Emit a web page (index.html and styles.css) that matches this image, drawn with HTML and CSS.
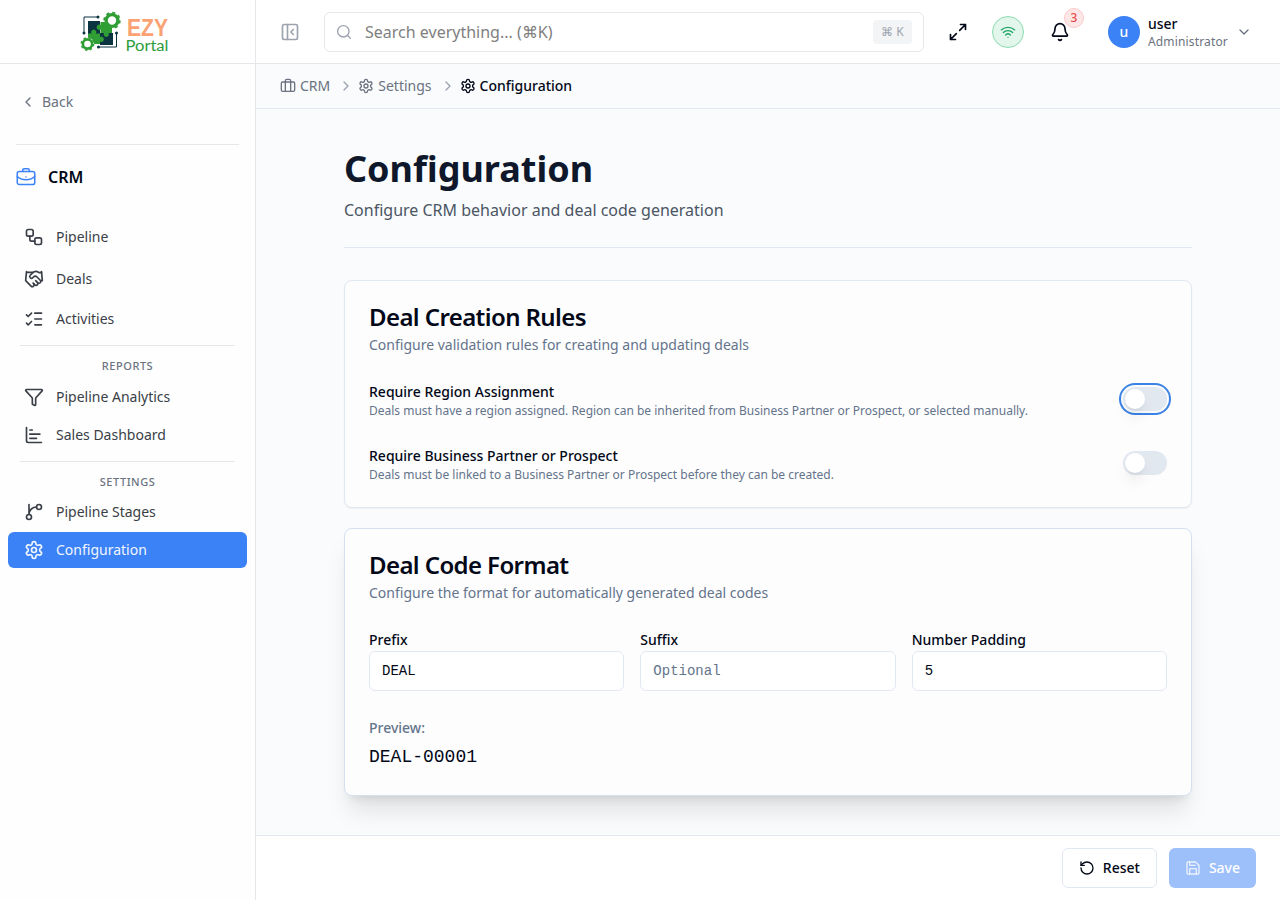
FILE: index.html
```html
<!DOCTYPE html>
<html lang="en">
<head>
<meta charset="utf-8">
<title>Configuration - EZY Portal</title>
<link rel="stylesheet" href="styles.css">
</head>
<body>
<svg class="defs" aria-hidden="true">
  <symbol id="gear" viewBox="0 0 24 24"><path d="M12.22 2h-.44a2 2 0 0 0-2 2v.18a2 2 0 0 1-1 1.73l-.43.25a2 2 0 0 1-2 0l-.15-.08a2 2 0 0 0-2.73.73l-.22.38a2 2 0 0 0 .73 2.73l.15.1a2 2 0 0 1 1 1.72v.51a2 2 0 0 1-1 1.74l-.15.09a2 2 0 0 0-.73 2.73l.22.38a2 2 0 0 0 2.73.73l.15-.08a2 2 0 0 1 2 0l.43.25a2 2 0 0 1 1 1.73V20a2 2 0 0 0 2 2h.44a2 2 0 0 0 2-2v-.18a2 2 0 0 1 1-1.73l.43-.25a2 2 0 0 1 2 0l.15.08a2 2 0 0 0 2.73-.73l.22-.39a2 2 0 0 0-.73-2.73l-.15-.08a2 2 0 0 1-1-1.74v-.5a2 2 0 0 1 1-1.74l.15-.09a2 2 0 0 0 .73-2.73l-.22-.38a2 2 0 0 0-2.73-.73l-.15.08a2 2 0 0 1-2 0l-.43-.25a2 2 0 0 1-1-1.73V4a2 2 0 0 0-2-2z"/><circle cx="12" cy="12" r="3"/></symbol>
  <symbol id="chev" viewBox="0 0 24 24"><path d="m9 18 6-6-6-6"/></symbol>
</svg>
<div class="app">
  <aside class="sidebar">
    <div class="brand">
      <svg class="logo" width="92" height="48" viewBox="80 10 92 48">
        <path d="M88 21h12v23H88zM100 33h13v12h-13z" fill="#0c3340"/>
        <path d="M84 33V17h13M116.500 33v14H99" fill="none" stroke="#0c3340" stroke-width="1"/>
        <g fill="#0c3340">
          <circle cx="84" cy="33" r="1.500"/><circle cx="116.500" cy="33" r="1.500"/>
          <circle cx="98" cy="17" r="1.500"/><circle cx="98.500" cy="47" r="1.500"/>
        </g>
        <g fill="#2f9e35">
          <path d="M100.500 22H112v11h-3.500a2.600 2.600 0 1 1-4.500 0h-3.500v-3.500a2.600 2.600 0 1 1 0-4.500z"/>
          <path d="M88 33.500h3.500a2.600 2.600 0 1 1 4.500 0h4v3.500a2.600 2.600 0 1 1 0 4.500V44H88z"/>
        </g>
        <g fill="#fff"><circle cx="112" cy="20.500" r="7.500"/><circle cx="87.500" cy="44" r="6.500"/></g>
        <g fill="none" stroke="#2f9e35">
          <circle cx="112" cy="20.500" r="5.900" stroke-width="3.400"/>
          <circle cx="112" cy="20.500" r="7.900" stroke-width="1.700" stroke-dasharray="3.100 3.100"/>
          <circle cx="87.500" cy="44" r="4.600" stroke-width="2.600"/>
          <circle cx="87.500" cy="44" r="6.200" stroke-width="1.400" stroke-dasharray="2.435 2.435"/>
        </g>
        <path d="M102 23.500h7l3 3.500V32h-9z" fill="#2f9e35"/>
        <text class="logo-top" x="127" y="36" textLength="41" lengthAdjust="spacingAndGlyphs">EZY</text>
        <text class="logo-bottom" x="125.500" y="51" textLength="43" lengthAdjust="spacingAndGlyphs">Portal</text>
      </svg>
    </div>
    <a class="back"><svg class="i16" viewBox="0 0 24 24"><path d="m15 18-6-6 6-6"/></svg>Back</a>
    <div class="module">
      <svg class="i20 module-icon" viewBox="0 0 24 24"><rect x="1.500" y="5.500" width="21" height="15.500" rx="2.500"/><path d="M8 5.500V4a2 2 0 0 1 2-2h4a2 2 0 0 1 2 2v1.500M1.500 11.500c5 5 16 5 21 0M12 12v.01"/></svg>
      <span>CRM</span>
    </div>
    <nav class="nav">
      <a class="item tall"><svg class="i20" viewBox="0 0 24 24"><rect x="3" y="3" width="8" height="8" rx="2"/><path d="M7 11v4a2 2 0 0 0 2 2h4"/><rect x="13" y="13" width="8" height="8" rx="2"/></svg>Pipeline</a>
      <a class="item deals"><svg class="i20" viewBox="0 0 24 24"><path d="m11 17 2 2a1 1 0 1 0 3-3"/><path d="m14 14 2.500 2.500a1 1 0 1 0 3-3l-3.880-3.880a3 3 0 0 0-4.240 0l-.88.88a1 1 0 1 1-3-3l2.810-2.810a5.790 5.790 0 0 1 7.060-.87l.47.28a2 2 0 0 0 1.420.25L21 4"/><path d="m21 3 1 11h-2M3 3 2 14l6.500 6.500a1 1 0 1 0 3-3M3 4h8"/></svg>Deals</a>
      <a class="item tall"><svg class="i20" viewBox="0 0 24 24"><path d="m3 17 2 2 4-4M3 7l2 2 4-4M13 5h8M13 12h8M13 19h8"/></svg>Activities</a>
      <h3 class="group">REPORTS</h3>
      <a class="item"><svg class="i20" viewBox="0 0 24 24"><path d="M10 20a1 1 0 0 0 .553.895l2 1A1 1 0 0 0 14 21v-7a2 2 0 0 1 .517-1.341L21.740 4.670A1 1 0 0 0 21 3H3a1 1 0 0 0-.742 1.670l7.225 7.989A2 2 0 0 1 10 14z"/></svg>Pipeline Analytics</a>
      <a class="item"><svg class="i20" viewBox="0 0 24 24"><path d="M3 3v16a2 2 0 0 0 2 2h16M7 16h8M7 11h12M7 6h3"/></svg>Sales Dashboard</a>
      <h3 class="group last">SETTINGS</h3>
      <a class="item"><svg class="i20" viewBox="0 0 24 24"><path d="M15 6a9 9 0 0 0-9 9V3"/><circle cx="18" cy="6" r="3"/><circle cx="6" cy="18" r="3"/></svg>Pipeline Stages</a>
      <a class="item active"><svg class="i20"><use href="#gear"/></svg>Configuration</a>
    </nav>
  </aside>
  <div class="content">
    <header class="topbar">
      <svg class="i20 collapse" viewBox="0 0 24 24"><rect x="3" y="3" width="18" height="18" rx="2"/><path d="M9 3v18M16 15l-3-3 3-3"/></svg>
      <div class="search">
        <svg class="i16" viewBox="0 0 24 24"><circle cx="11" cy="11" r="8.500"/><path d="m21.500 21.500-4.500-4.500"/></svg>
        <span>Search everything... (⌘K)</span>
        <kbd>⌘ K</kbd>
      </div>
      <svg class="i20 expand" viewBox="0 0 24 24"><path d="M15 3h6v6M21 3l-7 7M3 21l7-7M9 21H3v-6"/></svg>
      <div class="wifi"><svg class="i16" viewBox="0 0 24 24"><path d="M12 20h.01M2 8.820a15 15 0 0 1 20 0M5 12.859a10 10 0 0 1 14 0M8.500 16.429a5 5 0 0 1 7 0"/></svg></div>
      <div class="bell"><svg class="i20" viewBox="0 0 24 24"><path d="M10.268 21a2 2 0 0 0 3.464 0M3.262 15.326A1 1 0 0 0 4 17h16a1 1 0 0 0 .74-1.673C19.410 13.956 18 12.499 18 8A6 6 0 0 0 6 8c0 4.499-1.411 5.956-2.738 7.326"/></svg><span class="badge">3</span></div>
      <div class="avatar">u</div>
      <div class="who"><b>user</b><span>Administrator</span></div>
      <svg class="i16 down" viewBox="0 0 24 24"><path d="m6 9 6 6 6-6"/></svg>
    </header>
    <nav class="crumbs">
      <a><svg class="i16" viewBox="0 0 24 24"><path d="M16 20V4a2 2 0 0 0-2-2h-4a2 2 0 0 0-2 2v16"/><rect x="2" y="6" width="20" height="14" rx="2"/></svg>CRM</a>
      <svg class="i16 sep"><use href="#chev"/></svg>
      <a><svg class="i16"><use href="#gear"/></svg>Settings</a>
      <svg class="i16 sep"><use href="#chev"/></svg>
      <a class="current"><svg class="i16"><use href="#gear"/></svg>Configuration</a>
    </nav>
    <main class="main">
      <div class="heading">
        <h1>Configuration</h1>
        <p>Configure CRM behavior and deal code generation</p>
      </div>
      <section class="card">
        <h2>Deal Creation Rules</h2>
        <p class="desc">Configure validation rules for creating and updating deals</p>
        <div class="rule">
          <div><label>Require Region Assignment</label><p>Deals must have a region assigned. Region can be inherited from Business Partner or Prospect, or selected manually.</p></div>
          <span class="switch focused"></span>
        </div>
        <div class="rule">
          <div><label>Require Business Partner or Prospect</label><p>Deals must be linked to a Business Partner or Prospect before they can be created.</p></div>
          <span class="switch"></span>
        </div>
      </section>
      <section class="card raised">
        <h2>Deal Code Format</h2>
        <p class="desc">Configure the format for automatically generated deal codes</p>
        <div class="fields">
          <div><label>Prefix</label><input value="DEAL"></div>
          <div><label>Suffix</label><input placeholder="Optional"></div>
          <div><label>Number Padding</label><input value="5"></div>
        </div>
        <div class="preview"><label>Preview:</label><p>DEAL-00001</p></div>
      </section>
    </main>
    <footer class="actions">
      <button class="btn"><svg class="i16" viewBox="0 0 24 24"><path d="M3 12a9 9 0 1 0 9-9 9.750 9.750 0 0 0-6.740 2.740L3 8"/><path d="M3 3v5h5"/></svg>Reset</button>
      <button class="btn save"><svg class="i16" viewBox="0 0 24 24"><path d="M15.200 3a2 2 0 0 1 1.400.6l3.800 3.800a2 2 0 0 1 .6 1.400V19a2 2 0 0 1-2 2H5a2 2 0 0 1-2-2V5a2 2 0 0 1 2-2z"/><path d="M17 21v-7a1 1 0 0 0-1-1H8a1 1 0 0 0-1 1v7M7 3v4a1 1 0 0 0 1 1h7"/></svg>Save</button>
    </footer>
  </div>
</div>
</body>
</html>
```
FILE: styles.css
```css
* { box-sizing: border-box; margin: 0; padding: 0; }
body { font-family: "Noto Sans", sans-serif; font-size: 14px; line-height: 20px; color: #020817; background: #fff; }
svg { fill: none; stroke: currentColor; stroke-width: 2; stroke-linecap: round; stroke-linejoin: round; flex-shrink: 0; }
.defs { display: none; }
.i16 { width: 16px; height: 16px; }
.i20 { width: 20px; height: 20px; }
.app { display: flex; height: 900px; overflow: hidden; }

.sidebar { width: 256px; border-right: 1px solid #e5e7eb; background: #fefefe; flex-shrink: 0; }
.brand { height: 64px; border-bottom: 1px solid #e5e7eb; display: flex; justify-content: center; padding-top: 10px; background: #fff; }
.logo { stroke: none; stroke-linecap: butt; margin: 0 5px 0 2px; overflow: visible; }
.logo-top { fill: #fba172; font: 700 24px "Liberation Sans", sans-serif; }
.logo-bottom { fill: #2d9c3c; font: 400 15.5px Lato, sans-serif; }
.back { display: flex; align-items: center; gap: 6px; height: 81px; margin: 0 16px; padding: 0 0 5px 4px; border-bottom: 1px solid #e5e7eb; color: #6b7280; }
.module { display: flex; align-items: center; gap: 12px; height: 64px; padding: 0 16px; font-size: 16px; font-weight: 600; }
.module-icon { color: #3b82f6; stroke-width: 1.8; }
.nav { padding: 8px 8px 0; }
.item { display: flex; align-items: center; gap: 12px; height: 36px; margin-bottom: 2px; padding: 0 16px; border-radius: 6px; color: #3a3f47; }
.item.tall { height: 40px; margin: 0; }
.item.deals { height: 40px; margin: 2px 0 0; }
.item.active { background: #3b82f6; color: #f1f6fe; }
.group { margin: 8px 12px 0; padding: 12px 0 5px; border-top: 1px solid #e5e7eb; font-size: 11px; line-height: 16px; font-weight: 500; letter-spacing: .55px; text-align: center; color: #6b7280; }
.tall + .group { margin-top: 6px; }
.group.last { padding-bottom: 4px; }

.content { flex: 1; min-width: 0; display: flex; flex-direction: column; background: #f9fbfd; }
.topbar { height: 64px; flex-shrink: 0; display: flex; align-items: center; padding-left: 24px; border-bottom: 1px solid #e5e7eb; background: #fff; }
.collapse { color: #9ca3af; }
.search { width: 600px; height: 40px; margin-left: 24px; padding: 0 11px; display: flex; align-items: center; border: 1px solid #e5e7eb; border-radius: 6px; font-size: 16px; color: #808080; }
.search svg { color: #9ca3af; }
.search span { margin-left: 13px; }
.search kbd { margin-left: auto; width: 39px; height: 24px; border-radius: 4px; background: #f3f4f6; color: #9ca3af; font: 12px/24px "Noto Sans", sans-serif; text-align: center; }
.expand { margin-left: 24px; }
.wifi { width: 32px; height: 32px; margin-left: 24px; display: grid; place-items: center; border: 1px solid #8fd9b2; border-radius: 50%; background: #e3f6ec; color: #21a567; }
.bell { position: relative; display: flex; margin-left: 26px; }
.badge { position: absolute; left: 14px; top: -14px; width: 20px; height: 20px; border: 1px solid #fccaca; border-radius: 50%; background: #fee7e7; color: #e84a4a; font-size: 12px; line-height: 18px; font-weight: 500; text-align: center; }
.avatar { width: 32px; height: 32px; margin-left: 38px; border-radius: 50%; background: #3b82f6; color: #fff; font-weight: 500; line-height: 32px; text-align: center; }
.who { margin-left: 8px; width: 80px; display: flex; flex-direction: column; }
.who b { font-weight: 500; line-height: 19px; }
.who span { font-size: 12px; line-height: 17px; letter-spacing: .15px; color: #6b7280; }
.down { margin-left: 8px; color: #6b7280; }
.crumbs { height: 45px; flex-shrink: 0; display: flex; align-items: center; padding-left: 24px; border-bottom: 1px solid #e2e8f0; color: #6b7280; }
.crumbs a { display: flex; align-items: center; gap: 4px; }
.crumbs .sep { margin: 0 4px 0 8px; color: #9ca3af; }
.crumbs .current { color: #020817; font-weight: 500; }

.main { flex: 1; padding: 36px 88px 0; overflow: hidden; }
.heading { height: 103px; border-bottom: 1px solid #e2e8f0; margin-bottom: 32px; }
.heading h1 { font-size: 36px; line-height: 48px; font-weight: 700; color: #0f172a; }
.heading p { font-size: 16px; line-height: 24px; margin-top: 5px; color: #4b5563; }
.card { height: 228px; padding: 24px; border: 1px solid #e2e8f0; border-radius: 8px; background: #fdfdfe; box-shadow: 0 1px 2px rgba(0,0,0,.05); margin-bottom: 20px; }
.card.raised { height: 268px; border-color: #d5e0ef; box-shadow: 0 20px 25px -5px rgba(0,0,0,.1), 0 8px 10px -6px rgba(0,0,0,.1); }
.card h2 { font-size: 24px; line-height: 24px; font-weight: 600; letter-spacing: -.6px; }
.desc { margin-top: 6px; color: #64748b; }
.rule { display: flex; align-items: center; justify-content: space-between; height: 40px; margin-top: 24px; }
.rule label { display: block; font-weight: 500; line-height: 20px; }
.rule p { margin-top: 1px; font-size: 12px; line-height: 16px; color: #64748b; }
.rule > div { padding-top: 3px; }
.switch { width: 44px; height: 24px; border-radius: 12px; background: #e2e8f0; padding: 2px; }
.switch::before { content: ""; display: block; width: 20px; height: 20px; border-radius: 50%; background: #fff; box-shadow: 0 10px 15px -3px rgba(0,0,0,.1), 0 4px 6px -4px rgba(0,0,0,.1); }
.focused { box-shadow: 0 0 0 2px #f9fbfd, 0 0 0 4px #3b82e6; }
.fields { display: grid; grid-template-columns: repeat(3, 1fr); gap: 16px; margin-top: 27px; }
.fields label { display: block; font-weight: 500; line-height: 20px; }
.fields input { display: block; width: 100%; height: 40px; margin-top: 1px; padding: 0 12px; border: 1px solid #e2e8f0; border-radius: 6px; background: #fff; color: #020817; font: 14px "Liberation Mono", monospace; }
.fields input::placeholder { color: #64748b; opacity: 1; }
.preview { margin-top: 27px; }
.preview label { color: #64748b; font-weight: 500; }
.preview p { margin-top: 5px; font: 18px/28px "Liberation Mono", monospace; }

.actions { height: 65px; flex-shrink: 0; display: flex; justify-content: flex-end; gap: 12px; padding: 12px 24px; border-top: 1px solid #e2e8f0; background: #fff; }
.btn { height: 40px; padding: 0 16px; display: flex; align-items: center; gap: 8px; border: 1px solid #e2e8f0; border-radius: 6px; background: #fff; color: #020817; font: 500 14px/20px "Noto Sans", sans-serif; }
.save { border: 0; background: #9dc0fb; color: #fff; }
.save svg { opacity: .8; }
```
